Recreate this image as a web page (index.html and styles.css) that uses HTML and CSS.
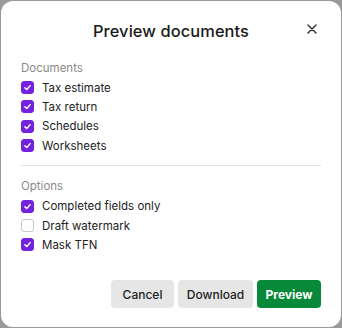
FILE: index.html
```html
<!DOCTYPE html>
<html>
<head>
<meta charset="utf-8">
<link rel="stylesheet" href="styles.css">
</head>
<body>
<div class="dialog">
  <div class="header">
    <h1 class="title">Preview documents</h1>
    <button class="close" aria-label="Close">
      <svg width="10" height="10" viewBox="0 0 10 10"><path d="M1 1 L9 9 M9 1 L1 9" stroke="#333" stroke-width="1.5" stroke-linecap="round"/></svg>
    </button>
  </div>
  <div class="section">
    <div class="label">Documents</div>
    <label class="row"><span class="box on"><svg viewBox="0 0 13 13"><path d="M3.3 6.8 L5.6 8.9 L9.7 4.3" fill="none" stroke="#fff" stroke-width="1.7" stroke-linecap="round" stroke-linejoin="round"/></svg></span>Tax estimate</label>
    <label class="row"><span class="box on"><svg viewBox="0 0 13 13"><path d="M3.3 6.8 L5.6 8.9 L9.7 4.3" fill="none" stroke="#fff" stroke-width="1.7" stroke-linecap="round" stroke-linejoin="round"/></svg></span>Tax return</label>
    <label class="row"><span class="box on"><svg viewBox="0 0 13 13"><path d="M3.3 6.8 L5.6 8.9 L9.7 4.3" fill="none" stroke="#fff" stroke-width="1.7" stroke-linecap="round" stroke-linejoin="round"/></svg></span>Schedules</label>
    <label class="row"><span class="box on"><svg viewBox="0 0 13 13"><path d="M3.3 6.8 L5.6 8.9 L9.7 4.3" fill="none" stroke="#fff" stroke-width="1.7" stroke-linecap="round" stroke-linejoin="round"/></svg></span>Worksheets</label>
  </div>
  <hr class="divider">
  <div class="section">
    <div class="label">Options</div>
    <label class="row"><span class="box on"><svg viewBox="0 0 13 13"><path d="M3.3 6.8 L5.6 8.9 L9.7 4.3" fill="none" stroke="#fff" stroke-width="1.7" stroke-linecap="round" stroke-linejoin="round"/></svg></span>Completed fields only</label>
    <label class="row"><span class="box"></span>Draft watermark</label>
    <label class="row"><span class="box on"><svg viewBox="0 0 13 13"><path d="M3.3 6.8 L5.6 8.9 L9.7 4.3" fill="none" stroke="#fff" stroke-width="1.7" stroke-linecap="round" stroke-linejoin="round"/></svg></span>Mask TFN</label>
  </div>
  <div class="actions">
    <button class="btn">Cancel</button>
    <button class="btn">Download</button>
    <button class="btn primary">Preview</button>
  </div>
</div>
</body>
</html>
```
FILE: styles.css
```css
html, body {
  margin: 0;
  padding: 0;
  background: #9a9a9a;
}
body {
  width: 342px;
  height: 328px;
  box-sizing: border-box;
  padding: 1px;
  font-family: Inter, "Noto Sans", sans-serif;
  color: #222;
}
.dialog {
  background: #fff;
  border-radius: 12px;
  height: 326px;
  box-sizing: border-box;
  padding: 0 20px 0 20px;
  display: flex;
  flex-direction: column;
}
.header {
  position: relative;
  display: flex;
  justify-content: center;
  align-items: center;
  height: 58.5px;
  padding-bottom: 0;
}
.title {
  margin: 0;
  font-size: 16.4px;
  font-weight: 500;
  color: #1a1a1a;
  letter-spacing: 0.1px;
  position: relative;
  top: 1px;
}
.close {
  position: absolute;
  right: 4px;
  top: 23px;
  border: 0;
  background: none;
  padding: 0;
  width: 10px;
  height: 10px;
  display: flex;
  align-items: center;
  justify-content: center;
}
.section {
  display: flex;
  flex-direction: column;
}
.label {
  font-size: 11.5px;
  color: #8a8a8a;
  height: 16px;
  line-height: 16px;
  margin-bottom: 2.5px;
}
.row {
  display: flex;
  align-items: center;
  gap: 8px;
  height: 19.3px;
  font-size: 11.5px;
  color: #222;
}
.box {
  width: 13px;
  height: 13px;
  box-sizing: border-box;
  border-radius: 3px;
  border: 1px solid #c8c8c8;
  background: #fff;
  display: flex;
  flex-shrink: 0;
}
.box.on {
  background: #7422e0;
  border-color: #7422e0;
}
.box svg {
  width: 11px;
  height: 11px;
}
.divider {
  border: 0;
  border-top: 1px solid #e2e2e2;
  margin: 10px 0 12px 0;
  width: 100%;
}
.actions {
  margin-top: auto;
  margin-bottom: 19px;
  display: flex;
  justify-content: flex-end;
  gap: 4px;
}
.btn {
  height: 28px;
  border: 0;
  border-radius: 4px;
  background: #e6e6e6;
  color: #222;
  font-family: Inter, "Noto Sans", sans-serif;
  font-size: 12px;
  font-weight: 500;
  padding: 0;
}
.btn:nth-child(1) { width: 63px; }
.btn:nth-child(2) { width: 75px; }
.btn.primary {
  background: #07893a;
  color: #fff;
  font-weight: 700;
  width: 64px;
}
```
